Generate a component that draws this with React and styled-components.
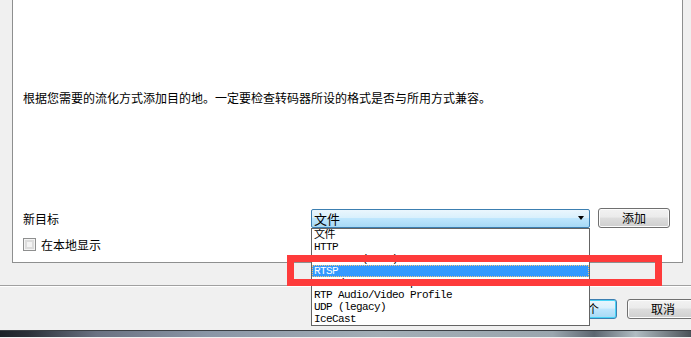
import React from 'react'
import styled, { createGlobalStyle } from 'styled-components'

const GlobalStyle = createGlobalStyle`
    html, body {
        margin: 0;
        padding: 0;
        background: #f0f0f0;
    }
    body {
        font-family: "Noto Sans CJK SC", "Liberation Sans", sans-serif;
        font-size: 12px;
        color: #000;
    }
`;

const destinations = [
    '文件',
    'HTTP',
    'MS-WMSP (MMSH)',
    'RTSP',
    'RTP / MPEG Transport Stream',
    'RTP Audio/Video Profile',
    'UDP (legacy)',
    'IceCast',
];

function App() {
    return (
        <>
            <GlobalStyle />
            <Page>
                <Panel>
                    <Description>根据您需要的流化方式添加目的地。一定要检查转码器所设的格式是否与所用方式兼容。</Description>
                    <TargetRow>
                        <Label>新目标</Label>
                        <ComboWrap>
                            <Combo>
                                <span>文件</span>
                                <Arrow />
                            </Combo>
                            <List>
                                {destinations.map((item, i) => (
                                    <Item key={item} selected={i === 3}>{item}</Item>
                                ))}
                            </List>
                        </ComboWrap>
                        <Button>添加</Button>
                    </TargetRow>
                    <CheckRow>
                        <Box />
                        <span>在本地显示</span>
                    </CheckRow>
                </Panel>
                <Footer>
                    <Button focused>下一个</Button>
                    <Button>取消</Button>
                </Footer>
                <Taskbar />
                <Marker />
            </Page>
        </>
    )
}

const Page = styled.div`
    position: relative;
    width: 691px;
    height: 338px;
    overflow: hidden;
    background: #f0f0f0;
    display: flex;
    flex-direction: column;
`;

const Panel = styled.div`
    box-sizing: border-box;
    height: 263px;
    margin: 0 8px 0 12px;
    padding: 91px 0 0 10px;
    background: #fff;
    border: 1px solid #8e8f8f;
    border-top: none;
    display: flex;
    flex-direction: column;
`;

const Description = styled.div`
    line-height: 14px;
    height: 14px;
`;

const TargetRow = styled.div`
    margin-top: 103px;
    display: grid;
    grid-template-columns: 280px 279px 72px;
    column-gap: 8px;
    align-items: center;
    height: 19px;
`;

const Label = styled.div`
    line-height: 19px;
`;

const ComboWrap = styled.div`
    position: relative;
    height: 19px;
    z-index: 2;
`;

const Combo = styled.div`
    box-sizing: border-box;
    height: 19px;
    padding: 0 0 0 2px;
    border: 1px solid #3c7fb1;
    border-radius: 2px;
    background: linear-gradient(#eaf6fd 0%, #d9f0fc 45%, #bee6fd 50%, #a7d9f5 100%);
    display: flex;
    align-items: center;
    justify-content: space-between;
    font-size: 13px;
    line-height: 17px;
`;

const Arrow = styled.span`
    width: 0;
    height: 0;
    margin-right: 5px;
    border-left: 3.5px solid transparent;
    border-right: 3.5px solid transparent;
    border-top: 4px solid #000;
`;

const List = styled.div`
    position: absolute;
    top: 19px;
    left: 0;
    width: 279px;
    box-sizing: border-box;
    border: 1px solid #646464;
    background: #fff;
    display: flex;
    flex-direction: column;
`;

const Item = styled.div`
    box-sizing: border-box;
    height: 12px;
    padding-left: 2px;
    font-family: "Liberation Mono", "Noto Sans CJK SC", monospace;
    font-size: 11px;
    letter-spacing: -0.6px;
    line-height: 12px;
    white-space: nowrap;
    overflow: hidden;
    color: ${p => p.selected ? '#fff' : '#000'};
    background: ${p => p.selected ? '#3399ff' : 'transparent'};
    outline: ${p => p.selected ? '1px dotted #f7c67a' : 'none'};
    outline-offset: -1px;
`;

const Button = styled.button`
    box-sizing: border-box;
    flex-shrink: 0;
    width: 72px;
    height: 20px;
    padding: 0;
    font-family: "Noto Sans CJK SC", "Liberation Sans", sans-serif;
    font-size: 12px;
    line-height: 18px;
    color: #000;
    border: 1px solid ${p => p.focused ? '#3c7fb1' : '#707070'};
    border-radius: 3px;
    box-shadow: ${p => p.focused ? 'inset 0 0 0 1px #48d3f6' : 'inset 0 0 0 1px #fcfcfc'};
    background: ${p => p.focused
        ? 'linear-gradient(#eaf6fd 0%, #d9f0fc 45%, #bee6fd 50%, #a7d9f5 100%)'
        : 'linear-gradient(#f2f2f2 0%, #ebebeb 45%, #dddddd 50%, #cfcfcf 100%)'};
`;

const CheckRow = styled.div`
    margin-top: 11px;
    display: flex;
    align-items: center;
    gap: 5px;
    height: 13px;
    line-height: 13px;
`;

const Box = styled.span`
    box-sizing: border-box;
    width: 13px;
    height: 13px;
    border: 1px solid #8e8f8f;
    background: #f4f4f4;
    box-shadow: inset 0 0 0 1px #f4f4f4, inset 0 0 0 3px #dcdcdc;
`;

const Footer = styled.div`
    margin-top: 22px;
    border-top: 1px solid #a0a0a0;
    box-shadow: inset 0 1px 0 #fff;
    padding: 13px 0 0 545px;
    height: 20px;
    display: flex;
    gap: 10px;
`;

const Taskbar = styled.div`
    margin-top: 11px;
    height: 6px;
    border-top: 1px solid #3a3f44;
    background: linear-gradient(90deg, #1c2228 0%, #2a3038 4%, #6a7282 14%, #8a96a6 30%, #a2aeb6 55%, #9aa6ae 80%, #5c6670 86%, #b0bcc2 92%, #4a5258 100%);
`;

const Marker = styled.div`
    position: absolute;
    left: 287px;
    top: 255px;
    width: 375px;
    height: 31px;
    box-sizing: border-box;
    border: 7px solid #fe3b3b;
    z-index: 3;
`;

export default App
